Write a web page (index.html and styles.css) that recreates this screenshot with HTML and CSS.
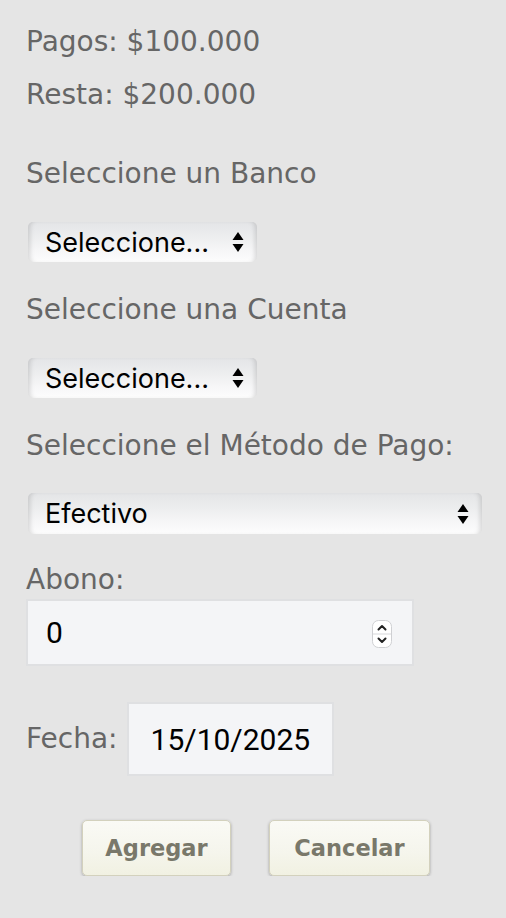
FILE: index.html
```html
<!DOCTYPE html>
<html lang="es">
<head>
<meta charset="utf-8">
<title>Abono</title>
<link rel="stylesheet" href="styles.css">
</head>
<body>
<form class="form">
  <p class="label summary first">Pagos: $100.000</p>
  <p class="label summary second">Resta: $200.000</p>

  <p class="label field-label">Seleccione un Banco</p>
  <div class="select-wrap narrow">
    <select class="select"><option>Seleccione...</option></select>
    <svg class="arrows" width="12" height="20" viewBox="0 0 12 20"><path d="M6 0 L11.5 8 L0.5 8 Z M0.5 12 L11.5 12 L6 20 Z" fill="#000"/></svg>
  </div>

  <p class="label field-label">Seleccione una Cuenta</p>
  <div class="select-wrap narrow">
    <select class="select"><option>Seleccione...</option></select>
    <svg class="arrows" width="12" height="20" viewBox="0 0 12 20"><path d="M6 0 L11.5 8 L0.5 8 Z M0.5 12 L11.5 12 L6 20 Z" fill="#000"/></svg>
  </div>

  <p class="label field-label">Seleccione el Método de Pago:</p>
  <div class="select-wrap wide">
    <select class="select"><option>Efectivo</option></select>
    <svg class="arrows" width="12" height="20" viewBox="0 0 12 20"><path d="M6 0 L11.5 8 L0.5 8 Z M0.5 12 L11.5 12 L6 20 Z" fill="#000"/></svg>
  </div>

  <p class="label abono-label">Abono:</p>
  <div class="number-wrap">
    <input class="number" type="text" value="0">
    <span class="spinner">
      <svg width="20" height="28" viewBox="0 0 20 28">
        <rect x="0.5" y="0.5" width="19" height="27" rx="6" fill="#fff" stroke="#cfd0d3"/>
        <line x1="1" y1="14" x2="19" y2="14" stroke="#d6d7da" stroke-width="1"/>
        <path d="M6.5 9.5 L10 6 L13.5 9.5" fill="none" stroke="#222" stroke-width="2" stroke-linecap="round" stroke-linejoin="round"/>
        <path d="M6.5 18.5 L10 22 L13.5 18.5" fill="none" stroke="#222" stroke-width="2" stroke-linecap="round" stroke-linejoin="round"/>
      </svg>
    </span>
  </div>

  <div class="date-row">
    <span class="label date-label">Fecha:</span>
    <input class="date" type="text" value="15/10/2025">
  </div>

  <div class="actions">
    <button type="button" class="btn btn-add">Agregar</button>
    <button type="button" class="btn btn-cancel">Cancelar</button>
  </div>
</form>
</body>
</html>
```
FILE: styles.css
```css
html, body {
  margin: 0;
  padding: 0;
  background: #e5e5e5;
}

.form {
  display: flex;
  flex-direction: column;
  align-items: flex-start;
  padding: 22px 0 0 26px;
}

.label {
  margin: 0;
  font-family: "DejaVu Sans", sans-serif;
  font-size: 28px;
  color: #666666;
  line-height: 40px;
  height: 40px;
}

.summary.second {
  margin-top: 13px;
}

.field-label {
  margin-top: 28px;
}

.summary.second + .field-label {
  margin-top: 39px;
}

.select-wrap {
  position: relative;
  margin-top: 28px;
  margin-left: 2px;
  height: 40px;
}

.select-wrap.narrow { width: 229px; }
.select-wrap.wide { width: 454px; height: 41px; margin-top: 27px; }

.select {
  -webkit-appearance: none;
  appearance: none;
  display: block;
  width: 100%;
  height: 100%;
  margin: 0;
  border: none;
  border-radius: 5px;
  padding: 0 0 0 17px;
  font-family: Inter, "Liberation Sans", Arial, sans-serif;
  font-size: 27px;
  color: #000;
  background: linear-gradient(to bottom, #e4e5e7 0%, #ecedee 35%, #f6f6f7 70%, #fdfdfd 100%);
  box-shadow: inset 5px 0 5px -3px rgba(0,0,0,0.14), inset -5px 0 5px -3px rgba(0,0,0,0.14);
}

.arrows {
  position: absolute;
  right: 13px;
  top: 10px;
  pointer-events: none;
}

.wide .arrows { top: 11px; }

.abono-label {
  margin-top: 28px;
  line-height: 36px;
  height: 36px;
}

.number-wrap {
  position: relative;
  margin-top: 1px;
  width: 388px;
  height: 67px;
}

.number, .date {
  box-sizing: border-box;
  margin: 0;
  border: 2px solid #dfe0e2;
  background: #f4f5f7;
  font-family: Roboto, "Liberation Sans", sans-serif;
  font-size: 30px;
  color: #000;
  outline: none;
}

.number {
  width: 100%;
  height: 100%;
  padding: 0 0 0 18px;
}

.spinner {
  position: absolute;
  right: 22px;
  top: 21px;
  width: 20px;
  height: 28px;
  display: block;
}

.spinner svg { display: block; }

.date-row {
  display: flex;
  align-items: center;
  margin-top: 36px;
  height: 74px;
}

.date-label {
  height: auto;
  margin-right: 9px;
}

.date {
  width: 207px;
  height: 74px;
  padding: 0 0 0 22px;
}

.actions {
  display: flex;
  justify-content: center;
  gap: 38px;
  align-self: stretch;
  margin: 44px 0 0 -26px;
  padding-left: 6px;
}

.btn {
  height: 56px;
  margin: 0;
  border: 1px solid #d3d1bd;
  border-radius: 5px;
  background: linear-gradient(to bottom, #fafaf5 0%, #f5f5ec 60%, #f1f1e2 100%);
  box-shadow: 0 1px 3px rgba(0,0,0,0.3);
  font-family: "DejaVu Sans", sans-serif;
  font-weight: bold;
  font-size: 22.5px;
  color: #79786a;
  padding: 0;
}

.btn-add { width: 149px; }
.btn-cancel { width: 161px; }
```
